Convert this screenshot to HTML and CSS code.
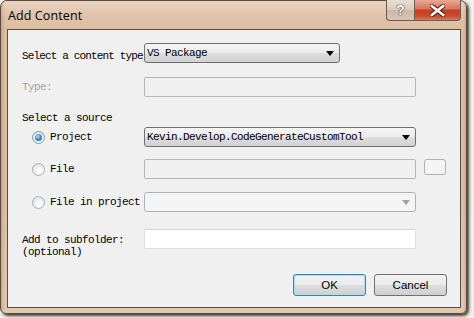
FILE: index.html
```html
<!DOCTYPE html>
<html>
<head>
<meta charset="utf-8">
<link rel="stylesheet" href="styles.css">
</head>
<body>
<div class="window">
  <div class="titlebar">
    <span class="title">Add Content</span>
    <div class="caption-btns">
      <div class="cap-btn help">?</div>
      <div class="cap-btn close">
        <svg width="13" height="11" viewBox="0 0 13 11"><path d="M1.5 1.5 L11.5 9.5 M11.5 1.5 L1.5 9.5" stroke="#5a2018" stroke-width="4" stroke-linecap="round"/><path d="M1.5 1.5 L11.5 9.5 M11.5 1.5 L1.5 9.5" stroke="#ffffff" stroke-width="2.2" stroke-linecap="round"/></svg>
      </div>
    </div>
  </div>
  <div class="client">
    <div class="row r1">
      <div class="label lbl-shift tight">Select a content type</div>
      <div class="combo w196"><span class="combo-text">VS Package</span><span class="arrow"></span></div>
    </div>
    <div class="row r2">
      <div class="label disabled">Type:</div>
      <div class="textbox disabled-box w272"></div>
    </div>
    <div class="row r3">
      <div class="label">Select a source</div>
    </div>
    <div class="row r4">
      <div class="label radio-label"><span class="radio checked"></span>Project</div>
      <div class="combo w272"><span class="combo-text">Kevin.Develop.CodeGenerateCustomTool</span><span class="arrow"></span></div>
    </div>
    <div class="row r5">
      <div class="label radio-label"><span class="radio"></span>File</div>
      <div class="textbox disabled-box w272"></div>
      <div class="browse"></div>
    </div>
    <div class="row r6">
      <div class="label radio-label"><span class="radio"></span>File in project</div>
      <div class="combo combo-disabled w272"><span class="combo-text"></span><span class="arrow grey"></span></div>
    </div>
    <div class="row r7">
      <div class="label two-line">Add to subfolder:<br>(optional)</div>
      <div class="textbox white w272"></div>
    </div>
    <div class="buttons">
      <div class="btn default">OK</div>
      <div class="btn">Cancel</div>
    </div>
  </div>
</div>
</body>
</html>
```

FILE: styles.css
```css
* { box-sizing: border-box; }
html, body { margin: 0; padding: 0; }
body {
  width: 474px;
  height: 318px;
  background: #f3efea;
  overflow: hidden;
  font-family: "Liberation Mono", monospace;
}
.window {
  width: 467px;
  height: 314px;
  padding: 0 5px 5px 6px;
  border-radius: 7px 7px 6px 6px;
  border: 1px solid #5b4a3c;
  background:
    linear-gradient(90deg, rgba(160,120,90,0.35) 0px, rgba(0,0,0,0) 4px, rgba(0,0,0,0) 462px, rgba(150,110,80,0.4) 467px),
    linear-gradient(180deg, #e9d4c1 0px, #dfc3a9 14px, #dcbea2 29px, #dcbfa5 200px, #e2c8b0 314px);
  box-shadow: 2px 2px 3px rgba(0,0,0,0.75);
  display: flex;
  flex-direction: column;
}
.titlebar {
  height: 28px;
  flex: none;
  display: flex;
  align-items: flex-start;
}
.title {
  font-family: "Open Sans", "Liberation Sans", sans-serif;
  font-size: 12.5px;
  color: #000;
  padding-top: 6px;
  padding-left: 1px;
  letter-spacing: 0.1px;
}
.caption-btns {
  margin-left: auto;
  display: flex;
  margin-top: -1px;
}
.cap-btn {
  height: 21px;
  border: 1px solid #6e5d50;
  border-top: none;
  display: flex;
  align-items: center;
  justify-content: center;
}
.help {
  width: 28px;
  border-right: none;
  border-radius: 0 0 0 4px;
  background: linear-gradient(180deg, #e9ddd2 0%, #dccbbd 50%, #cdb7a5 51%, #d9c6b6 100%);
  font-family: "Liberation Sans", sans-serif;
  font-weight: bold;
  font-size: 14px;
  color: #fff;
  text-shadow: 0 0 1px #333, 0 0 1px #333, 0 0 1px #333;
}
.close {
  width: 47px;
  border-radius: 0 0 4px 0;
  background: linear-gradient(180deg, #e8a996 0%, #d8745c 45%, #c4401f 50%, #c94a2c 80%, #d97a5e 100%);
}
.close svg { transform: scale(1.15); }
.client {
  height: 279px;
  flex: none;
  border: 1px solid #4f4f4f;
  background: #f0f0f0;
  padding: 0 0 0 14px;
  display: flex;
  flex-direction: column;
}
.row {
  display: flex;
  align-items: center;
  height: 20px;
}
.r1 { margin-top: 13px; }
.r2 { margin-top: 14px; }
.r3 { margin-top: 14px; height: 14px; }
.r4 { margin-top: 2px; }
.r5 { margin-top: 12px; }
.r6 { margin-top: 13px; }
.r7 { margin-top: 17px; height: auto; align-items: flex-start; }
.label {
  width: 122px;
  flex: none;
  font-size: 11px;
  letter-spacing: -0.6px;
  color: #000;
  white-space: nowrap;
  line-height: 12px;
}
.tight { letter-spacing: -0.85px; }
.lbl-shift { padding-top: 6px; }
.disabled { color: #a3a3a3; }
.radio-label {
  display: flex;
  align-items: center;
  padding-left: 10px;
}
.radio {
  width: 13px;
  height: 13px;
  border-radius: 50%;
  border: 1px solid #a9aeb3;
  background: radial-gradient(circle at 60% 65%, #ffffff 0%, #f2f2f2 40%, #d4d6d8 100%);
  margin-right: 5px;
  flex: none;
  display: flex;
  align-items: center;
  justify-content: center;
}
.radio.checked { border-color: #8f959b; }
.radio.checked::after {
  content: "";
  width: 7px;
  height: 7px;
  border-radius: 50%;
  background: radial-gradient(circle at 40% 35%, #b9e2ff 0%, #3a95db 45%, #0b4f9a 100%);
}
.two-line { padding-top: 5px; }
.w196 { width: 196px; }
.w272 { width: 272px; }
.combo {
  height: 20px;
  border: 1px solid #707070;
  border-radius: 3px;
  background: linear-gradient(180deg, #f6f6f6 0%, #ebebeb 50%, #dddddd 51%, #d2d2d2 100%);
  display: flex;
  align-items: center;
  padding-left: 2px;
  padding-right: 5px;
}
.combo-text {
  font-size: 11px;
  letter-spacing: -0.6px;
  flex: 1;
  white-space: nowrap;
  color: #000;
}
.arrow {
  width: 0;
  height: 0;
  border-left: 4px solid transparent;
  border-right: 4px solid transparent;
  border-top: 5px solid #000;
  flex: none;
}
.arrow.grey { border-top-color: #a0a0a0; }
.combo-disabled {
  border-color: #adb2b5;
  background: #f4f4f4;
}
.textbox {
  height: 20px;
  border-radius: 2px;
}
.disabled-box {
  border: 1px solid #b5b5b5;
  background: #f0f0f0;
}
.white {
  border: 1px solid #dde1e6;
  border-top-color: #cfd4da;
  background: #fff;
}
.browse {
  width: 22px;
  height: 16px;
  margin-left: 8px;
  align-self: flex-start;
  border: 1px solid #adb2b5;
  border-radius: 3px;
  background: #f4f4f4;
}
.buttons {
  display: flex;
  justify-content: flex-end;
  gap: 8px;
  margin-top: 16px;
  padding-right: 13px;
}
.btn {
  width: 73px;
  height: 22px;
  border: 1px solid #707070;
  border-radius: 3px;
  background: linear-gradient(180deg, #f2f2f2 0%, #ebebeb 50%, #dddddd 51%, #cfcfcf 100%);
  font-family: "Liberation Sans", sans-serif;
  font-size: 11.5px;
  display: flex;
  align-items: center;
  justify-content: center;
  color: #000;
}
.btn.default {
  border-color: #3c7fb1;
  box-shadow: inset 0 0 0 1px #a8dcf3;
}
```
